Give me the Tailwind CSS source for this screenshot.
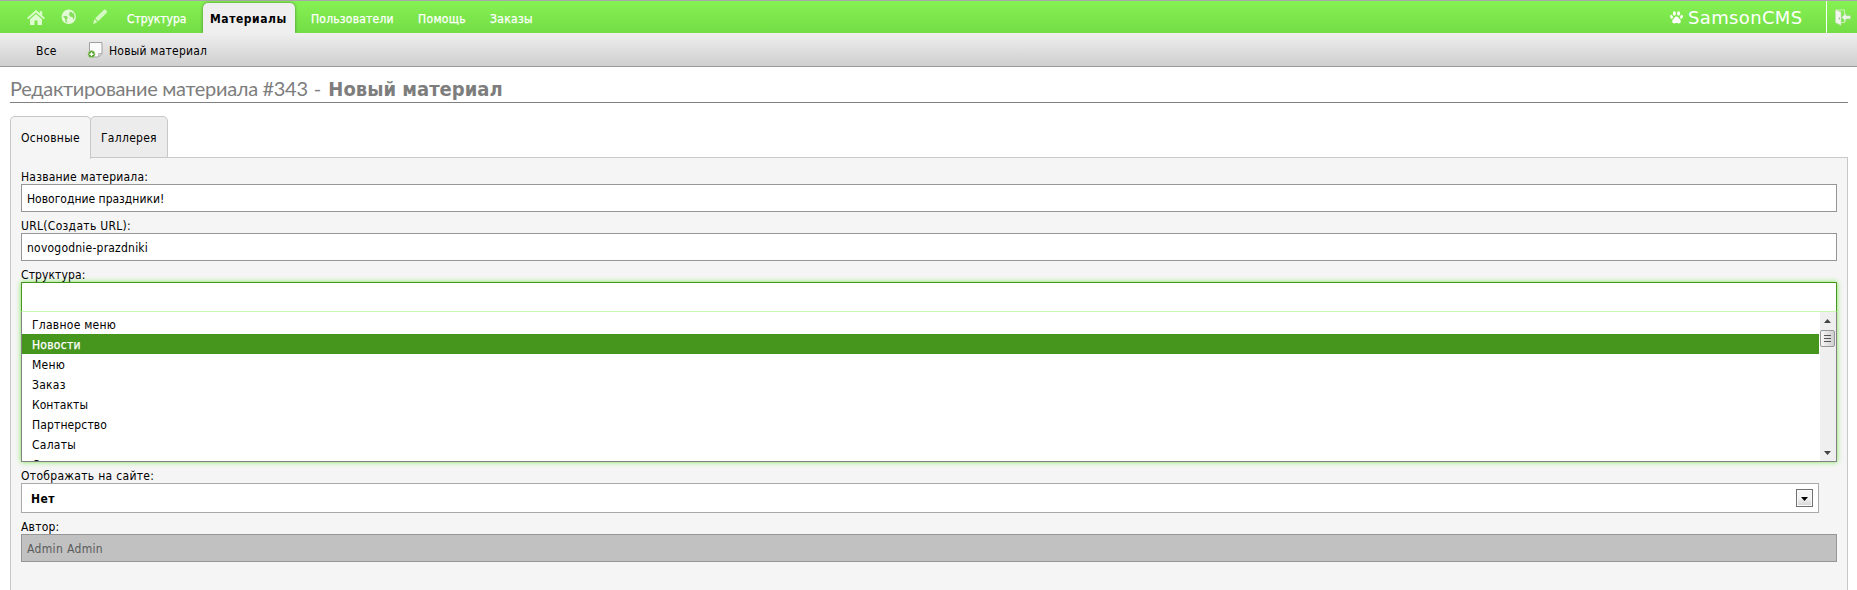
<!DOCTYPE html>
<html lang="ru">
<head>
<meta charset="utf-8">
<title>SamsonCMS</title>
<script src="https://cdn.jsdelivr.net/npm/@tailwindcss/browser@4"></script>
</head>
<body class="w-[1857px] h-[590px] overflow-hidden flex flex-col bg-white text-black text-[12px] leading-4 tracking-[0.22px] font-['DejaVu_Sans_Condensed','DejaVu_Sans',sans-serif] [font-stretch:condensed] whitespace-nowrap">
<header class="flex h-[33px] shrink-0 border-t border-[#a9a9a9] bg-linear-to-b from-[#86f153] to-[#73dd45] text-white">
  <nav class="flex flex-1">
    <a class="ml-[27px] mt-[9px] w-8"><svg width="19" height="15" viewBox="0 0 19 15" fill="#dffbd0"><path d="M9 0 0 8l1.300 1.300L9 2.600l7.700 6.700L18 8l-2.800-2.500V1.300h-2.400v2z"/><path d="M9 4 3 9.300V15h4.500v-4.500h3V15H15V9.300z"/></svg></a>
    <a class="mt-[8px] ml-[2px] w-[31px]"><svg width="16" height="16" viewBox="0 0 16 16"><circle cx="7.700" cy="7.800" r="7.200" fill="#e2fad5"/><path d="M7.500 1.500 10 3.200 8.300 6l1.200 3 2 .8.500 3.400q-2 1.300-4 1.100L6.500 12 7.800 9.500 5.500 7.500 3 8 2 6.500Q3.500 4.500 6 4.500z" fill="#e2fad5"/><path d="M9.300 2.500 8 5l.8 2.500 2.700.5.700 3 1.600-3.500-1-3zM2 7.500 4 9.500 4.500 12.500 6.500 14 5.500 10.500 7 8.500 5.200 6.800z" fill="#85dd5c"/></svg></a>
    <a class="mt-[8px] w-[35px]"><svg width="16" height="16" viewBox="0 0 16 16" fill="#d5f9c2"><path d="M11.500 1.200q1.500-1.200 2.800 0t.2 2.800L6.200 12.300 3.200 9.300zM2.500 10 5.400 12.900 1 15.200z"/></svg></a>
    <a class="mt-2.5 w-[76px] tracking-[-0.05px] [-webkit-text-stroke:0.25px_white]">Структура</a>
    <a class="mt-[2px] h-[30px] w-[92px] rounded-t-[5px] bg-[#efefef] pl-[7px] pt-2 font-bold text-black tracking-[0.55px] shadow-[0_0_3px_#4c7d38] [clip-path:inset(-4px_-4px_0_-4px)]">Материалы</a>
    <a class="mt-2.5 ml-4 w-[107px] [-webkit-text-stroke:0.25px_white]">Пользователи</a>
    <a class="mt-2.5 w-[72px] tracking-[0.33px] [-webkit-text-stroke:0.25px_white]">Помощь</a>
    <a class="mt-2.5 tracking-[0.33px] [-webkit-text-stroke:0.25px_white]">Заказы</a>
  </nav>
  <div class="flex w-[156px] items-start">
    <svg class="mt-[10px]" width="13" height="13" viewBox="0 0 13 13" fill="#fff"><ellipse cx="4.400" cy="2.400" rx="1.500" ry="2.200"/><ellipse cx="8.600" cy="2.400" rx="1.500" ry="2.200"/><ellipse cx="1.500" cy="5.800" rx="1.300" ry="2" transform="rotate(-20 1.500 5.800)"/><ellipse cx="11.500" cy="5.800" rx="1.300" ry="2" transform="rotate(20 11.500 5.800)"/><path d="M6.500 5.500c2 0 2.500 2 3.700 3.300 1.300 1.600.2 4-1.700 3.600-1.300-.4-2.700-.4-4 0-1.900.4-3-2-1.700-3.600C4 7.500 4.500 5.500 6.500 5.500z"/></svg>
    <span class="ml-[5px] mt-[6px] text-[18px] leading-[22px] tracking-[0.35px] font-['DejaVu_Sans',sans-serif] [font-stretch:normal]">SamsonCMS</span>
  </div>
  <a class="w-[31px] border-l border-white pt-[8px] pl-[8px]"><svg width="16" height="17" viewBox="0 0 16 17"><path d="M1 1h8.500v12.500H6" fill="none" stroke="#c9f3b4"/><path d="M.5.700 6 3v13.300L.5 13.500z" fill="#f2f6ef" stroke="#c3dcb7" stroke-width=".6"/><path d="M4.300 8.500v2" stroke="#93b781"/><path d="M6.500 8.300 11 4.200v2.500h4.500v3.200H11v2.500z" fill="#eaf6e4" stroke="#a8d692" stroke-width=".6"/></svg></a>
</header>
<div class="flex h-[34px] shrink-0 border-b border-[#989898] bg-linear-to-b from-[#efefef] to-[#cfcfcf]">
  <a class="ml-9 mt-2.5 w-[51px]">Все</a>
  <svg class="mt-[8px]" width="17" height="18" viewBox="0 0 17 18"><path d="M2.500 1.500h12.500v11l-3.500 3.500h-9z" fill="#fbfbfb" stroke="#a0a0a0"/><path d="M15 12.500h-3.500V16z" fill="#dadada" stroke="#a8a8a8" stroke-width=".7"/><circle cx="4.500" cy="13.200" r="3.600" fill="#4d9b22" stroke="#c1dcae" stroke-width=".8"/><path d="M2.500 13.200h4m-2-2v4" stroke="#fff" stroke-width="1.400"/></svg>
  <a class="ml-[5px] mt-2.5">Новый материал</a>
</div>
<main class="flex min-h-0 flex-1 flex-col px-[9px] pl-[10px]">
  <h1 class="h-9 shrink-0 border-b border-[#808080] pt-[9px] text-[20px] leading-6 text-[#7d7d7d]"><span class="font-[Lato] tracking-[-0.32px]">Редактирование материала #343</span><span class="font-[Lato] ml-[6px] mr-[7px]">-</span><b class="tracking-normal">Новый материал</b></h1>
  <div class="z-10 mt-[13px] flex h-[42px] shrink-0">
    <a class="-mb-px w-[81px] rounded-t-[5px] border border-b-0 border-[#c8c8c8] bg-[#f5f5f5] pl-2.5 pt-[13px] tracking-[0.28px]">Основные</a>
    <a class="-ml-px h-[42px] w-[78px] rounded-t-[5px] border border-[#c8c8c8] bg-[#ececec] pl-2.5 pt-[13px] tracking-[0.28px]">Галлерея</a>
  </div>
  <section class="-mt-px flex flex-1 flex-col border border-b-0 border-[#c8c8c8] bg-[#f5f5f5] px-2.5 pt-[11px]">
    <label class="h-[15px]">Название материала:</label>
    <div class="h-7 border border-[#969696] bg-white pl-[5px] pt-[6px] tracking-normal">Новогодние праздники!</div>
    <label class="mt-[6px] h-[15px] tracking-[0.3px]">URL(Создать URL):</label>
    <div class="h-7 border border-[#969696] bg-white pl-[5px] pt-[6px]">novogodnie-prazdniki</div>
    <label class="z-10 mt-[6px] h-[15px] tracking-[0.1px]">Структура:</label>
    <div class="flex h-[180px] shrink-0 flex-col border border-[#808080] border-t-[#46961e] bg-white shadow-[0_0_5px_#7be650]">
      <div class="-mx-px h-[29px] shrink-0 border-x border-b border-x-[#46961e] border-b-[#c9f7b4]"></div>
      <div class="flex min-h-0 flex-1">
        <ul class="flex-1 overflow-hidden pt-[2px] leading-[22px] tracking-[0.25px]">
          <li class="h-5 pl-2.5">Главное меню</li>
          <li class="h-5 bg-[#46961e] pl-2.5 text-white [-webkit-text-stroke:0.25px_white]">Новости</li>
          <li class="h-5 pl-2.5">Меню</li>
          <li class="h-5 pl-2.5">Заказ</li>
          <li class="h-5 pl-2.5 tracking-[0.05px]">Контакты</li>
          <li class="h-5 pl-2.5 tracking-[0.13px]">Партнерство</li>
          <li class="h-5 pl-2.5">Салаты</li>
          <li class="h-5 pl-2.5">Супы</li>
        </ul>
        <div class="ml-px flex w-4 flex-col items-center justify-between bg-[#efefef] pr-px">
          <div class="flex flex-col items-center">
            <svg class="mt-[7px]" width="7" height="4" viewBox="0 0 7 4"><path d="M0 4 3.500 0 7 4z" fill="#444"/></svg>
            <div class="mt-[7px] flex h-[17px] w-[15px] flex-col items-center justify-center gap-[2px] rounded-[2px] border border-[#979797] bg-linear-to-r from-[#f6f6f6] to-[#cfcfcf]">
              <i class="h-px w-[7px] bg-[#555]"></i><i class="h-px w-[7px] bg-[#555]"></i><i class="h-px w-[7px] bg-[#555]"></i>
            </div>
          </div>
          <svg class="mb-[6px]" width="7" height="4" viewBox="0 0 7 4"><path d="M0 0h7L3.500 4z" fill="#444"/></svg>
        </div>
      </div>
    </div>
    <label class="mt-[6px] h-[15px] tracking-[0.3px]">Отображать на сайте:</label>
    <div class="mr-[18px] flex h-[30px] items-center justify-between border border-[#a9a9a9] bg-white pl-[9px] pr-[5px]">
      <b class="pt-px tracking-[0.45px]">Нет</b>
      <span class="flex h-[18px] w-[17px] items-center justify-center border border-[#707070] bg-linear-to-b from-[#f4f4f4] from-50% to-[#d4d4d4] shadow-[inset_0_0_0_1px_#fafafa]"><svg class="mt-px" width="7" height="4" viewBox="0 0 7 4"><path d="M0 0h7L3.500 4z"/></svg></span>
    </div>
    <label class="mt-[6px] h-[15px]">Автор:</label>
    <div class="h-7 border border-[#969696] bg-[#c1c1c1] pl-[5px] pt-[6px] tracking-[0.35px] text-[#5a5a5a]">Admin Admin</div>
  </section>
</main>
</body>
</html>
